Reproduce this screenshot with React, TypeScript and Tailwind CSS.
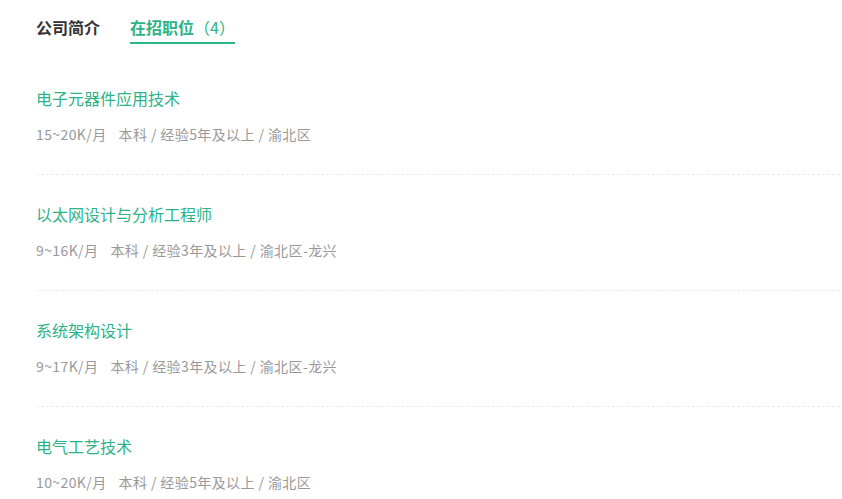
import React from 'react';

type Job = {
  title: string;
  salary: string;
  detail: string;
};

const jobs: Job[] = [
  { title: '电子元器件应用技术', salary: '15~20K/月', detail: '本科 / 经验5年及以上 / 渝北区' },
  { title: '以太网设计与分析工程师', salary: '9~16K/月', detail: '本科 / 经验3年及以上 / 渝北区-龙兴' },
  { title: '系统架构设计', salary: '9~17K/月', detail: '本科 / 经验3年及以上 / 渝北区-龙兴' },
  { title: '电气工艺技术', salary: '10~20K/月', detail: '本科 / 经验5年及以上 / 渝北区' },
];

const App = () => {
  return (
    <div
      className="w-[842px] h-[499px] overflow-hidden bg-white pl-9 pr-[2px]"
      style={{ fontFamily: '"Noto Sans CJK SC", "Liberation Sans", sans-serif' }}
    >
      {/* Tabs */}
      <div className="flex gap-[30px] pt-4">
        <div className="text-base leading-[22px] font-bold text-[#333] pb-1">公司简介</div>
        <div className="text-base leading-[22px] text-[#2cb387] pb-[4px] border-b-2 border-[#2cb387]">
          <span className="font-bold">在招职位</span>（4）
        </div>
      </div>

      {/* Job list */}
      <ul className="mt-[43px]">
        {jobs.map((job, i) => (
          <li
            key={job.title}
            className={
              i < jobs.length - 1
                ? 'pb-[30px] border-b border-dashed border-[#ebebeb]'
                : ''
            }
          >
            <div className={i > 0 ? 'pt-[28px]' : ''}>
              <p className="text-base leading-[22px] text-[#2cb387]">{job.title}</p>
              <p className="mt-[15px] text-sm leading-5 tracking-[0.4px] text-[#999]">
                {job.salary}
                <span className="ml-3">{job.detail}</span>
              </p>
            </div>
          </li>
        ))}
      </ul>
    </div>
  );
};

export default App;
